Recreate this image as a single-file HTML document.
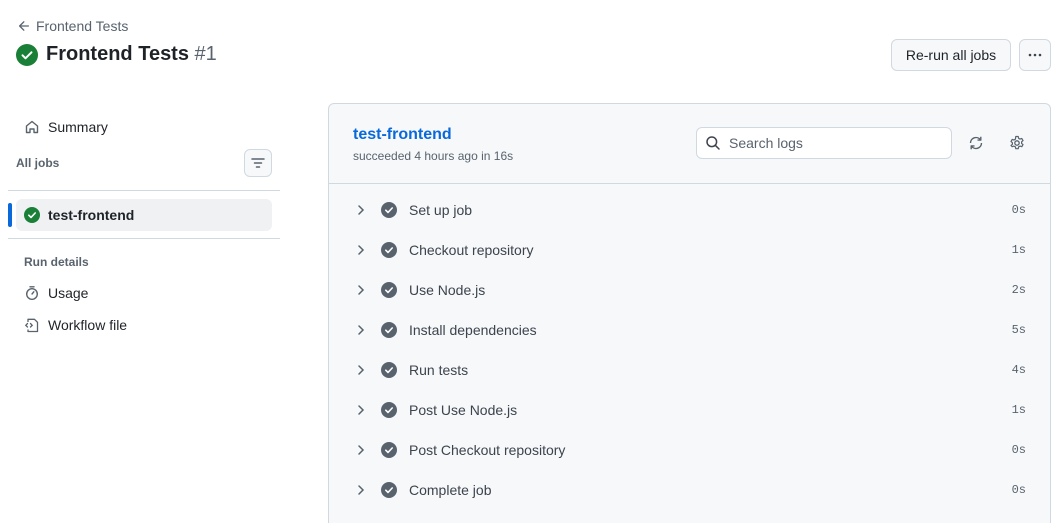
<!DOCTYPE html>
<html><head><meta charset="utf-8"><style>
*{box-sizing:border-box;margin:0;padding:0}
html,body{width:1057px;height:523px;overflow:hidden}
body{background:#fff;font-family:"Liberation Sans",sans-serif;color:#1f2328;position:relative}
.abs{position:absolute}
.btn{position:absolute;border:1px solid #d1d9e0;border-radius:6px;background:#f6f8fa;font-size:14px;display:flex;align-items:center;justify-content:center}
.nav{position:absolute;left:24px;display:flex;align-items:center;font-size:14px;color:#1f2328}
.nav svg{margin-right:8px}
.panel{position:absolute;left:328px;top:103px;width:723px;height:420px;border:1px solid #d1d9e0;border-bottom:none;border-radius:6px 6px 0 0;background:#f6f8fa}
.step{position:absolute;left:0;width:100%;height:40px;display:flex;align-items:center;font-size:14px;color:#3d444d}
.step .chev{position:absolute;left:28px;top:14px}
.step .ck{position:absolute;left:52px;top:12px}
.step .nm{position:absolute;left:80px;top:12px}
.step .t{position:absolute;right:24px;top:13px;font-family:"Liberation Mono",monospace;font-size:12px;color:#59636e}
</style></head><body>
<div class="abs" style="left:17px;top:18px;font-size:14px;color:#59636e;display:flex;align-items:center">
<svg width="14" height="14" viewBox="0 0 16 16" style="margin-right:5px"><path d="M7.8 3.2 3 8l4.8 4.8M3 8h10" fill="none" stroke="#59636e" stroke-width="1.5" stroke-linecap="round" stroke-linejoin="round"/></svg>Frontend Tests</div>
<svg class="abs" style="left:16px;top:44px" width="22" height="22" viewBox="0 0 22 22"><circle cx="11" cy="11" r="11" fill="#1a7f37"/><path d="M6.5 11.3l3 3 6-6" fill="none" stroke="#fff" stroke-width="2" stroke-linecap="round" stroke-linejoin="round"/></svg>
<div class="abs" style="left:46px;top:43px;font-size:20px;font-weight:bold">Frontend Tests <span style="font-weight:normal;color:#59636e">#1</span></div>
<div class="btn" style="left:891px;top:39px;width:120px;height:32px">Re-run all jobs</div>
<div class="btn" style="left:1019px;top:39px;width:32px;height:32px"><svg width="16" height="4" viewBox="0 0 16 4"><circle cx="3" cy="2" r="1.3" fill="#3d444d"/><circle cx="8" cy="2" r="1.3" fill="#3d444d"/><circle cx="13" cy="2" r="1.3" fill="#3d444d"/></svg></div>

<div class="nav" style="top:119px"><svg width="16" height="16" viewBox="0 0 16 16"><path d="M2.5 7 8 2.5 13.5 7v6.5h-3.5V10H6v3.5H2.5z" fill="none" stroke="#59636e" stroke-width="1.4" stroke-linejoin="round"/></svg>Summary</div>
<div class="abs" style="left:16px;top:156px;font-size:12px;font-weight:bold;color:#59636e">All jobs</div>
<div class="btn" style="left:244px;top:149px;width:28px;height:28px"><svg width="14" height="12" viewBox="0 0 14 12"><path d="M1 2h12M3.5 6h7M5.5 10h3" stroke="#59636e" stroke-width="1.5" stroke-linecap="round"/></svg></div>
<div class="abs" style="left:8px;top:190px;width:272px;height:1px;background:#d1d9e0"></div>
<div class="abs" style="left:8px;top:203px;width:4px;height:24px;border-radius:2px;background:#0969da"></div>
<div class="abs" style="left:16px;top:199px;width:256px;height:32px;border-radius:6px;background:#eff1f3"></div>
<svg class="abs" style="left:24px;top:207px" width="16" height="16" viewBox="0 0 16 16"><circle cx="8" cy="8" r="8" fill="#1a7f37"/><path d="M4.8 8.2l2.2 2.2 4.2-4.4" fill="none" stroke="#fff" stroke-width="1.6" stroke-linecap="round" stroke-linejoin="round"/></svg>
<div class="abs" style="left:48px;top:207px;font-size:14px;font-weight:bold">test-frontend</div>
<div class="abs" style="left:8px;top:238px;width:272px;height:1px;background:#d1d9e0"></div>
<div class="abs" style="left:24px;top:255px;font-size:12px;font-weight:bold;color:#59636e">Run details</div>
<div class="nav" style="top:285px"><svg width="16" height="16" viewBox="0 0 16 16"><circle cx="8" cy="9" r="5.3" fill="none" stroke="#59636e" stroke-width="1.4"/><path d="M6 1.8h4M8 9 9.8 6.8" stroke="#59636e" stroke-width="1.4" stroke-linecap="round"/></svg>Usage</div>
<div class="nav" style="top:317px"><svg width="16" height="16" viewBox="0 0 16 16"><path d="M4 5V2.3h6.5L13.5 5.3v9.2H4v-2" fill="none" stroke="#59636e" stroke-width="1.3" stroke-linejoin="round"/><path d="M3.5 6.5 1.8 8.3l1.7 1.7M6.5 6.5l1.7 1.8-1.7 1.7" fill="none" stroke="#59636e" stroke-width="1.3" stroke-linecap="round"/></svg>Workflow file</div>

<div class="panel">
<div class="abs" style="left:24px;top:22px;font-size:16px;font-weight:bold;color:#0969da">test-frontend</div>
<div class="abs" style="left:24px;top:45px;font-size:12px;color:#59636e">succeeded 4 hours ago in 16s</div>
<div class="abs" style="left:367px;top:23px;width:256px;height:32px;background:#fff;border:1px solid #d1d9e0;border-radius:6px;font-size:14px;color:#59636e;display:flex;align-items:center;padding-left:8px">
<svg width="16" height="16" viewBox="0 0 16 16" style="margin-right:8px"><circle cx="6.8" cy="6.8" r="4.8" fill="none" stroke="#3d444d" stroke-width="1.5"/><path d="M10.3 10.3 14 14" stroke="#3d444d" stroke-width="1.5" stroke-linecap="round"/></svg>Search logs</div>
<svg class="abs" style="left:639px;top:31px" width="16" height="16" viewBox="0 0 16 16"><path d="M2.5 8A5.5 5.5 0 0 1 12.3 4.6M13.5 8A5.5 5.5 0 0 1 3.7 11.4" fill="none" stroke="#59636e" stroke-width="1.4"/><path d="M12.8 1.8v3.3H9.5M3.2 14.2v-3.3h3.3" fill="none" stroke="#59636e" stroke-width="1.4" stroke-linejoin="round"/></svg>
<svg class="abs" style="left:680px;top:31px" width="16" height="16" viewBox="0 0 16 16"><circle cx="8" cy="8" r="2.2" fill="none" stroke="#59636e" stroke-width="1.3"/><path d="M6.8 1.5h2.4l.4 1.8 1.4.8 1.8-.6 1.2 2.1-1.4 1.2v1.6l1.4 1.2-1.2 2.1-1.8-.6-1.4.8-.4 1.8H6.8l-.4-1.8-1.4-.8-1.8.6L2 10.5l1.4-1.2V7.7L2 6.5l1.2-2.1 1.8.6 1.4-.8z" fill="none" stroke="#59636e" stroke-width="1.2" stroke-linejoin="round"/></svg>
<div class="abs" style="left:0;top:79px;width:100%;height:1px;background:#d1d9e0"></div>
</div>
<div class="abs" style="left:329px;top:186px;width:721px;height:337px;overflow:hidden">
<div class="step" style="top:4px"><svg class="chev" width="8" height="12" viewBox="0 0 8 12"><path d="M2 2l4 4-4 4" fill="none" stroke="#59636e" stroke-width="1.5" stroke-linecap="round"/></svg><svg class="ck" width="16" height="16" viewBox="0 0 16 16"><circle cx="8" cy="8" r="8" fill="#59636e"/><path d="M4.8 8.2l2.2 2.2 4.2-4.4" fill="none" stroke="#fff" stroke-width="1.6" stroke-linecap="round" stroke-linejoin="round"/></svg><span class="nm">Set up job</span><span class="t">0s</span></div>
<div class="step" style="top:44px"><svg class="chev" width="8" height="12" viewBox="0 0 8 12"><path d="M2 2l4 4-4 4" fill="none" stroke="#59636e" stroke-width="1.5" stroke-linecap="round"/></svg><svg class="ck" width="16" height="16" viewBox="0 0 16 16"><circle cx="8" cy="8" r="8" fill="#59636e"/><path d="M4.8 8.2l2.2 2.2 4.2-4.4" fill="none" stroke="#fff" stroke-width="1.6" stroke-linecap="round" stroke-linejoin="round"/></svg><span class="nm">Checkout repository</span><span class="t">1s</span></div>
<div class="step" style="top:84px"><svg class="chev" width="8" height="12" viewBox="0 0 8 12"><path d="M2 2l4 4-4 4" fill="none" stroke="#59636e" stroke-width="1.5" stroke-linecap="round"/></svg><svg class="ck" width="16" height="16" viewBox="0 0 16 16"><circle cx="8" cy="8" r="8" fill="#59636e"/><path d="M4.8 8.2l2.2 2.2 4.2-4.4" fill="none" stroke="#fff" stroke-width="1.6" stroke-linecap="round" stroke-linejoin="round"/></svg><span class="nm">Use Node.js</span><span class="t">2s</span></div>
<div class="step" style="top:124px"><svg class="chev" width="8" height="12" viewBox="0 0 8 12"><path d="M2 2l4 4-4 4" fill="none" stroke="#59636e" stroke-width="1.5" stroke-linecap="round"/></svg><svg class="ck" width="16" height="16" viewBox="0 0 16 16"><circle cx="8" cy="8" r="8" fill="#59636e"/><path d="M4.8 8.2l2.2 2.2 4.2-4.4" fill="none" stroke="#fff" stroke-width="1.6" stroke-linecap="round" stroke-linejoin="round"/></svg><span class="nm">Install dependencies</span><span class="t">5s</span></div>
<div class="step" style="top:164px"><svg class="chev" width="8" height="12" viewBox="0 0 8 12"><path d="M2 2l4 4-4 4" fill="none" stroke="#59636e" stroke-width="1.5" stroke-linecap="round"/></svg><svg class="ck" width="16" height="16" viewBox="0 0 16 16"><circle cx="8" cy="8" r="8" fill="#59636e"/><path d="M4.8 8.2l2.2 2.2 4.2-4.4" fill="none" stroke="#fff" stroke-width="1.6" stroke-linecap="round" stroke-linejoin="round"/></svg><span class="nm">Run tests</span><span class="t">4s</span></div>
<div class="step" style="top:204px"><svg class="chev" width="8" height="12" viewBox="0 0 8 12"><path d="M2 2l4 4-4 4" fill="none" stroke="#59636e" stroke-width="1.5" stroke-linecap="round"/></svg><svg class="ck" width="16" height="16" viewBox="0 0 16 16"><circle cx="8" cy="8" r="8" fill="#59636e"/><path d="M4.8 8.2l2.2 2.2 4.2-4.4" fill="none" stroke="#fff" stroke-width="1.6" stroke-linecap="round" stroke-linejoin="round"/></svg><span class="nm">Post Use Node.js</span><span class="t">1s</span></div>
<div class="step" style="top:244px"><svg class="chev" width="8" height="12" viewBox="0 0 8 12"><path d="M2 2l4 4-4 4" fill="none" stroke="#59636e" stroke-width="1.5" stroke-linecap="round"/></svg><svg class="ck" width="16" height="16" viewBox="0 0 16 16"><circle cx="8" cy="8" r="8" fill="#59636e"/><path d="M4.8 8.2l2.2 2.2 4.2-4.4" fill="none" stroke="#fff" stroke-width="1.6" stroke-linecap="round" stroke-linejoin="round"/></svg><span class="nm">Post Checkout repository</span><span class="t">0s</span></div>
<div class="step" style="top:284px"><svg class="chev" width="8" height="12" viewBox="0 0 8 12"><path d="M2 2l4 4-4 4" fill="none" stroke="#59636e" stroke-width="1.5" stroke-linecap="round"/></svg><svg class="ck" width="16" height="16" viewBox="0 0 16 16"><circle cx="8" cy="8" r="8" fill="#59636e"/><path d="M4.8 8.2l2.2 2.2 4.2-4.4" fill="none" stroke="#fff" stroke-width="1.6" stroke-linecap="round" stroke-linejoin="round"/></svg><span class="nm">Complete job</span><span class="t">0s</span></div>
</div>
</body></html>
